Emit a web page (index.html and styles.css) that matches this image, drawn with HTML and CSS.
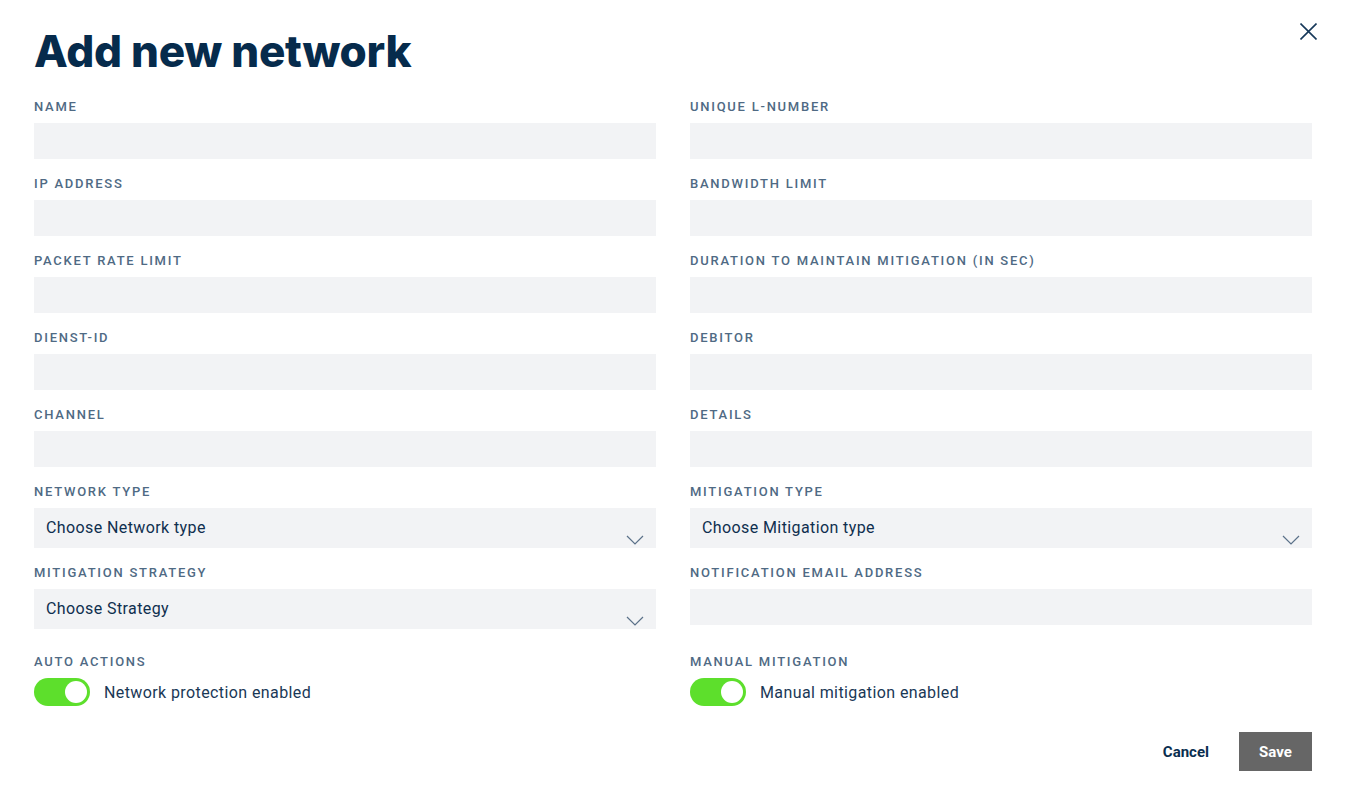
FILE: index.html
```html
<!DOCTYPE html>
<html lang="en">
<head>
<meta charset="utf-8">
<title>Add new network</title>
<link rel="stylesheet" href="styles.css">
</head>
<body>
<div class="modal">
  <button class="close" aria-label="Close">
    <svg width="17" height="17" viewBox="0 0 17 17"><path d="M0.5 0.5 L16.5 16.5 M16.5 0.5 L0.5 16.5" stroke="#17395a" stroke-width="1.6" fill="none"/></svg>
  </button>
  <h1 class="title">Add new network</h1>
  <form class="grid">
    <div class="field"><label class="label">Name</label><div class="input"></div></div>
    <div class="field"><label class="label">Unique L-number</label><div class="input"></div></div>
    <div class="field"><label class="label">IP address</label><div class="input"></div></div>
    <div class="field"><label class="label">Bandwidth limit</label><div class="input"></div></div>
    <div class="field"><label class="label">Packet rate limit</label><div class="input"></div></div>
    <div class="field"><label class="label">Duration to maintain mitigation (in sec)</label><div class="input"></div></div>
    <div class="field"><label class="label">Dienst-ID</label><div class="input"></div></div>
    <div class="field"><label class="label">Debitor</label><div class="input"></div></div>
    <div class="field"><label class="label">Channel</label><div class="input"></div></div>
    <div class="field"><label class="label">Details</label><div class="input"></div></div>
    <div class="field"><label class="label">Network type</label>
      <div class="select"><span>Choose Network type</span>
        <svg class="chev" width="18" height="12" viewBox="0 0 18 12"><path d="M1 2 L9 10 L17 2" stroke="#5b7189" stroke-width="1.2" fill="none"/></svg>
      </div></div>
    <div class="field"><label class="label">Mitigation type</label>
      <div class="select"><span>Choose Mitigation type</span>
        <svg class="chev" width="18" height="12" viewBox="0 0 18 12"><path d="M1 2 L9 10 L17 2" stroke="#5b7189" stroke-width="1.2" fill="none"/></svg>
      </div></div>
    <div class="field"><label class="label">Mitigation strategy</label>
      <div class="select"><span>Choose Strategy</span>
        <svg class="chev" width="18" height="12" viewBox="0 0 18 12"><path d="M1 2 L9 10 L17 2" stroke="#5b7189" stroke-width="1.2" fill="none"/></svg>
      </div></div>
    <div class="field"><label class="label">Notification email address</label><div class="input"></div></div>
    <div class="field toggle-field"><label class="label">Auto actions</label>
      <div class="toggle-row"><span class="toggle"><span class="knob"></span></span><span class="toggle-text">Network protection enabled</span></div></div>
    <div class="field toggle-field"><label class="label">Manual mitigation</label>
      <div class="toggle-row"><span class="toggle"><span class="knob"></span></span><span class="toggle-text">Manual mitigation enabled</span></div></div>
  </form>
  <div class="actions">
    <button class="btn-cancel">Cancel</button>
    <button class="btn-save">Save</button>
  </div>
</div>
</body>
</html>
```

FILE: styles.css
```css
* { box-sizing: border-box; }
html, body { margin: 0; padding: 0; background: #fff; }
body { font-family: Roboto, "Liberation Sans", sans-serif; color: #0f2f4f; }
.modal { position: relative; padding: 23px 34px 0 34px; width: 1346px; }
.close { position: absolute; top: 23px; right: 29px; background: none; border: 0; padding: 0; width: 17px; height: 17px; cursor: pointer; }
.close svg { display: block; }
.title { margin: 0 0 20px 0; font-family: Inter, "Open Sans", sans-serif; font-weight: 800; font-size: 44px; line-height: 56px; color: #062b4c; letter-spacing: -0.3px; }
.grid { display: grid; grid-template-columns: 622px 622px; column-gap: 34px; row-gap: 17px; }
.field { display: flex; flex-direction: column; }
.label { font-size: 13px; line-height: 16px; font-weight: 500; letter-spacing: 1.75px; text-transform: uppercase; color: #4f6a84; margin-bottom: 8px; }
.input { height: 36px; background: #f2f3f5; }
.select { position: relative; height: 40px; background: #f2f3f5; padding: 0 12px; display: flex; align-items: center; font-size: 16px; letter-spacing: 0.4px; color: #0f2f4f; }
.select span { margin-top: -2px; }
.chev { position: absolute; right: 12px; bottom: 2px; }
.toggle-field { margin-top: 8px; }
.toggle-row { display: flex; align-items: center; gap: 14px; }
.toggle { width: 56px; height: 28px; border-radius: 14px; background: #5ddf2c; display: flex; align-items: center; justify-content: flex-end; padding-right: 3px; }
.knob { width: 22px; height: 22px; border-radius: 50%; background: #fff; }
.toggle-text { font-size: 16px; letter-spacing: 0.4px; color: #1a3856; }
.actions { display: flex; justify-content: flex-end; align-items: center; gap: 30px; margin-top: 26px; }
.btn-cancel { background: none; border: 0; font-family: Roboto, "Liberation Sans", sans-serif; font-weight: 700; font-size: 15px; color: #0a2e4f; padding: 0; }
.btn-save { background: #666; border: 0; width: 73px; height: 39px; font-family: Roboto, "Liberation Sans", sans-serif; font-weight: 700; font-size: 15px; color: #fff; }
```
